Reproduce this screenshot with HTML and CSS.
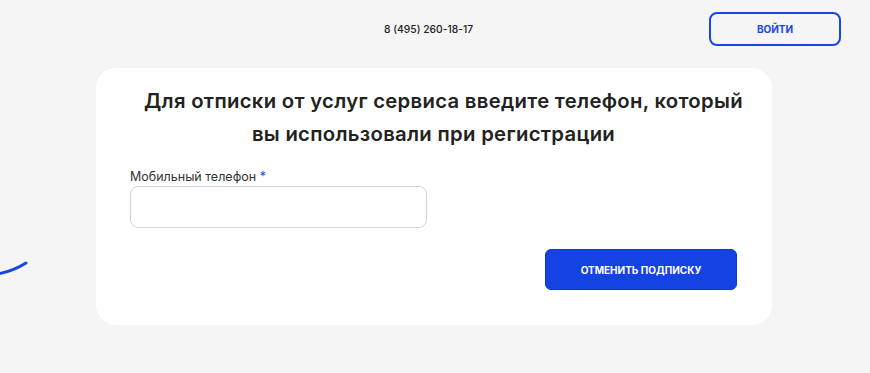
FILE: index.html
```html
<!DOCTYPE html>
<html lang="ru">
<head>
<meta charset="utf-8">
<link rel="stylesheet" href="styles.css">
</head>
<body>
<svg class="deco" width="40" height="30" viewBox="0 0 40 30"><path d="M-2 16 C 8 14, 18 10, 26 5" fill="none" stroke="#1a45e6" stroke-width="3" stroke-linecap="round"/></svg>
<header class="header">
  <span class="phone">8 (495) 260-18-17</span>
  <a class="login" href="#">ВОЙТИ</a>
</header>
<main class="card">
  <h1 class="title"><span class="line1">Для отписки от услуг сервиса введите телефон, который</span><br>вы использовали при регистрации</h1>
  <label class="label">Мобильный телефон <span class="req">*</span></label>
  <input class="input" type="text">
  <div class="actions">
    <button class="submit">ОТМЕНИТЬ ПОДПИСКУ</button>
  </div>
</main>
</body>
</html>
```
FILE: styles.css
```css
* { box-sizing: border-box; }
html, body { margin: 0; padding: 0; }
body {
  background: #f5f5f5;
  font-family: Inter, "Noto Sans", sans-serif;
  color: #222;
  width: 870px;
  height: 373px;
  overflow: hidden;
  position: relative;
}
.deco { position: absolute; left: 0; top: 258px; }
.header {
  display: flex;
  align-items: center;
  height: 46px;
  padding: 12px 29px 0 384px;
}
.phone {
  font-size: 10.3px;
  font-weight: 500;
  color: #222;
}
.login {
  margin-left: auto;
  width: 132px;
  height: 34px;
  border: 2px solid #1a45e6;
  border-radius: 8px;
  display: flex;
  align-items: center;
  justify-content: center;
  color: #1a45e6;
  font-size: 10px;
  font-weight: 700;
  text-decoration: none;
}
.card {
  margin: 22px 0 0 96px;
  width: 676px;
  height: 257px;
  background: #fff;
  border-radius: 20px;
  padding: 16px 35px 0 34px;
  display: flex;
  flex-direction: column;
}
.title {
  margin: 0;
  font-size: 20.3px;
  font-weight: 600;
  line-height: 33px;
  text-align: center;
  color: #222;
  white-space: nowrap;
  letter-spacing: 0.3px;
}
.line1 { padding-left: 14px; }
.label {
  margin-top: 19px;
  font-size: 12.5px;
  line-height: 16px;
  color: #333;
}
.req { color: #1a45e6; }
.input {
  margin-top: 1px;
  width: 297px;
  height: 42px;
  border: 1px solid #d4d4d4;
  border-radius: 8px;
  background: #fff;
  outline: none;
}
.actions {
  display: flex;
  justify-content: flex-end;
  margin-top: 21px;
}
.submit {
  width: 192px;
  height: 41px;
  background: #1542e3;
  border: 1px solid #1038c8;
  border-radius: 6px;
  color: #fff;
  font-family: inherit;
  font-size: 10px;
  font-weight: 700;
}
```
